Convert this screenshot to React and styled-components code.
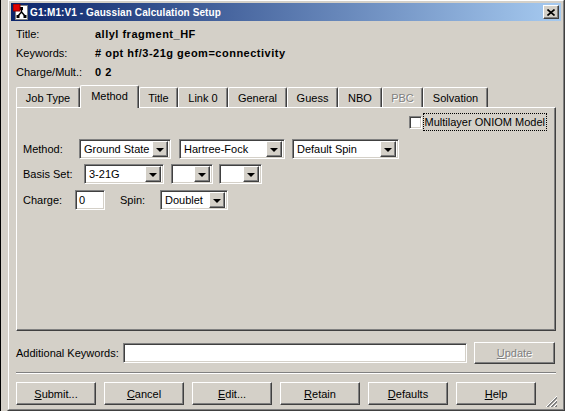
import styled, { createGlobalStyle } from "styled-components";

const GlobalStyle = createGlobalStyle`
  html, body {
    margin: 0;
    padding: 0;
  }
  body {
    width: 565px;
    height: 417px;
    overflow: hidden;
    background: #fff;
    font-family: "Liberation Sans", Arial, sans-serif;
    font-size: 11px;
    color: #000;
  }
`;

const face = "#d4d0c8";

const Desktop = styled.div`
  width: 565px;
  height: 417px;
  overflow: hidden;
  display: flex;
  flex-direction: column;
  background: #fff;
`;

const Upper = styled.div`
  display: flex;
  height: 411px;
  flex: none;
`;

const BackStrip = styled.div`
  width: 6px;
  flex: none;
  background: ${face};
  border-left: 1px solid #000;
`;

const Window = styled.div`
  flex: none;
  width: 558px;
  height: 412px;
  margin-top: -1px;
  box-sizing: border-box;
  border: 1px solid;
  border-color: ${face} #404040 #404040 ${face};
  background: ${face};
  display: flex;
`;

const WindowInner = styled.div`
  flex: 1;
  position: relative;
  border: 1px solid;
  border-color: #fff #808080 #808080 #fff;
  padding: 2px;
  display: flex;
  flex-direction: column;
`;

const TitleBar = styled.div`
  height: 18px;
  flex: none;
  display: flex;
  align-items: center;
  padding: 0 2px;
  background: linear-gradient(to right, #0a246a, #a6caf0);
`;

const TitleText = styled.span`
  margin-left: 1px;
  color: #fff;
  font-weight: bold;
  font-size: 10px;
  letter-spacing: 0.1px;
  white-space: nowrap;
`;

const raised = `
  border: 1px solid;
  border-color: #fff #404040 #404040 #fff;
  box-shadow: inset -1px -1px #808080;
  background: ${face};
`;

const CloseButton = styled.div`
  ${raised}
  box-sizing: border-box;
  margin-left: auto;
  width: 16px;
  height: 14px;
  display: flex;
  align-items: center;
  justify-content: center;
`;

const Content = styled.div`
  flex: 1;
  padding: 0 5px;
  display: flex;
  flex-direction: column;
`;

const Header = styled.div`
  margin-top: 3px;
  display: flex;
  flex-direction: column;
`;

const HeaderRow = styled.div`
  height: 19px;
  display: flex;
  align-items: center;
`;

const HeaderLabel = styled.span`
  width: 79px;
  flex: none;
`;

const HeaderValue = styled.span`
  font-weight: bold;
  letter-spacing: 0.5px;
  white-space: nowrap;
`;

const TabStrip = styled.div`
  margin-top: 4px;
  height: 22px;
  display: flex;
  align-items: flex-end;
  position: relative;
  z-index: 1;
`;

const Tab = styled.div`
  box-sizing: border-box;
  width: ${(p) => p.$w}px;
  height: ${(p) => (p.$active ? 23 : 20)}px;
  margin-bottom: ${(p) => (p.$active ? -1 : 0)}px;
  padding-bottom: ${(p) => (p.$active ? 3 : 0)}px;
  border-top: 1px solid #fff;
  border-left: 1px solid #fff;
  border-right: 1px solid #404040;
  border-radius: 2px 2px 0 0;
  box-shadow: inset -1px 0 #808080;
  background: ${face};
  display: flex;
  align-items: center;
  justify-content: center;
  white-space: nowrap;
  color: ${(p) => (p.$disabled ? "#808080" : "#000")};
  text-shadow: ${(p) => (p.$disabled ? "1px 1px #fff" : "none")};
`;

const Pane = styled.div`
  height: 224px;
  box-sizing: border-box;
  border: 1px solid;
  border-color: #fff #404040 #404040 #fff;
  box-shadow: inset -1px -1px #808080;
  padding: 5px 8px 0 6px;
  display: flex;
  flex-direction: column;
`;

const CheckRow = styled.div`
  height: 18px;
  display: flex;
  align-items: center;
  justify-content: flex-end;
`;

const sunken = `
  border: 1px solid;
  border-color: #808080 #fff #fff #808080;
  box-shadow: inset 1px 1px #404040, inset -1px -1px ${face};
`;

const CheckBox = styled.div`
  ${sunken}
  box-sizing: border-box;
  width: 13px;
  height: 13px;
  background: #fff;
`;

const FocusLabel = styled.span`
  margin-left: 1px;
  padding: 2px 1px;
  border: 1px dotted #000;
  white-space: nowrap;
`;

const FormRow = styled.div`
  margin-top: ${(p) => p.$top}px;
  display: flex;
  align-items: center;
`;

const FieldLabel = styled.span`
  width: ${(p) => p.$w}px;
  flex: none;
  white-space: nowrap;
`;

const Combo = styled.div`
  ${sunken}
  box-sizing: border-box;
  width: ${(p) => p.$w}px;
  height: 20px;
  margin-right: ${(p) => p.$mr || 0}px;
  flex: none;
  background: #fff;
  display: flex;
  align-items: center;
  padding: 2px;
`;

const ComboText = styled.span`
  flex: 1;
  padding-left: 2px;
  white-space: nowrap;
  overflow: hidden;
`;

const DropButton = styled.div`
  ${raised}
  box-sizing: border-box;
  width: 16px;
  height: 16px;
  flex: none;
  display: flex;
  align-items: center;
  justify-content: center;
  box-shadow: inset -1px -1px #808080, inset 1px 1px ${face};
  &::after {
    content: "";
    width: 0;
    height: 0;
    border-left: 4px solid transparent;
    border-right: 4px solid transparent;
    border-top: 4px solid #000;
    margin-top: 1px;
  }
`;

const TextField = styled.div`
  ${sunken}
  box-sizing: border-box;
  width: ${(p) => p.$w}px;
  height: 20px;
  flex: none;
  background: #fff;
  display: flex;
  align-items: center;
  padding: 0 3px;
  margin-right: ${(p) => p.$mr || 0}px;
`;

const KeywordRow = styled.div`
  margin-top: 11px;
  height: 22px;
  display: flex;
  align-items: center;
`;

const Button = styled.div`
  box-sizing: border-box;
  width: ${(p) => p.$w || 80}px;
  height: ${(p) => p.$h || 23}px;
  flex: none;
  border: 1px solid;
  border-color: #fff #404040 #404040 #fff;
  box-shadow: inset -1px -1px #808080;
  background: ${face};
  display: flex;
  align-items: center;
  justify-content: center;
  color: ${(p) => (p.$disabled ? "#808080" : "#000")};
  text-shadow: ${(p) => (p.$disabled ? "1px 1px #fff" : "none")};
  u {
    text-underline-offset: 1px;
  }
`;

const Separator = styled.div`
  margin-top: 8px;
  border-top: 1px solid #808080;
  border-bottom: 1px solid #fff;
`;

const ButtonRow = styled.div`
  margin-top: 8px;
  display: flex;
  gap: 8px;
`;

const Grip = styled.div`
  position: absolute;
  right: 6px;
  bottom: 2px;
  width: 13px;
  height: 13px;
  display: flex;
`;

const BottomStrip = styled.div`
  flex: 1;
  background: #fff;
`;

const AppIcon = () => (
  <svg width="16" height="16" viewBox="0 0 16 16">
    <rect x="2.5" y="1.5" width="12" height="14" fill="#fff" stroke="#808080" />
    <path d="M8.5 4 L8.5 8 L5 12 M8.5 8 L12 12" stroke="#000" strokeWidth="1.4" fill="none" />
    <rect x="7" y="3" width="3" height="3" fill="#000" />
    <rect x="3.5" y="11" width="3" height="3" fill="#000" />
    <rect x="10.5" y="11" width="3" height="3" fill="#000" />
    <rect x="0" y="0" width="7" height="7" fill="#e00000" stroke="#800000" />
  </svg>
);

const CloseGlyph = () => (
  <svg width="8" height="7" viewBox="0 0 8 7">
    <path d="M0.5 0.5 L7.5 6.5 M7.5 0.5 L0.5 6.5" stroke="#000" strokeWidth="1.6" />
  </svg>
);

const GripGlyph = () => (
  <svg width="13" height="13" viewBox="0 0 13 13">
    {[0, 4, 8].map((o) => (
      <g key={o}>
        <line x1={o + 2} y1="13" x2="13" y2={o + 2} stroke="#fff" />
        <line x1={o + 3} y1="13" x2="13" y2={o + 3} stroke="#808080" />
        <line x1={o + 4} y1="13" x2="13" y2={o + 4} stroke="#808080" />
      </g>
    ))}
  </svg>
);

const tabs = [
  { label: "Job Type", w: 64 },
  { label: "Method", w: 59, active: true },
  { label: "Title", w: 39 },
  { label: "Link 0", w: 50 },
  { label: "General", w: 59 },
  { label: "Guess", w: 51 },
  { label: "NBO", w: 44 },
  { label: "PBC", w: 41, disabled: true },
  { label: "Solvation", w: 65 },
];

const buttons = [
  ["S", "ubmit..."],
  ["C", "ancel"],
  ["E", "dit..."],
  ["R", "etain"],
  ["D", "efaults"],
  ["H", "elp"],
];

const Select = ({ w, mr, children }) => (
  <Combo $w={w} $mr={mr}>
    <ComboText>{children}</ComboText>
    <DropButton />
  </Combo>
);

export default function App() {
  return (
    <>
      <GlobalStyle />
      <Desktop>
        <Upper>
          <BackStrip />
          <Window>
            <WindowInner>
              <TitleBar>
                <AppIcon />
                <TitleText>G1:M1:V1 - Gaussian Calculation Setup</TitleText>
                <CloseButton>
                  <CloseGlyph />
                </CloseButton>
              </TitleBar>
              <Content>
                <Header>
                  <HeaderRow>
                    <HeaderLabel>Title:</HeaderLabel>
                    <HeaderValue>allyl fragment_HF</HeaderValue>
                  </HeaderRow>
                  <HeaderRow>
                    <HeaderLabel>Keywords:</HeaderLabel>
                    <HeaderValue># opt hf/3-21g geom=connectivity</HeaderValue>
                  </HeaderRow>
                  <HeaderRow>
                    <HeaderLabel>Charge/Mult.:</HeaderLabel>
                    <HeaderValue>0 2</HeaderValue>
                  </HeaderRow>
                </Header>

                <TabStrip>
                  {tabs.map((t) => (
                    <Tab key={t.label} $w={t.w} $active={t.active} $disabled={t.disabled}>
                      {t.label}
                    </Tab>
                  ))}
                </TabStrip>

                <Pane>
                  <CheckRow>
                    <CheckBox />
                    <FocusLabel>Multilayer ONIOM Model</FocusLabel>
                  </CheckRow>
                  <FormRow $top={8}>
                    <FieldLabel $w={56}>Method:</FieldLabel>
                    <Select w={92} mr={8}>Ground State</Select>
                    <Select w={106} mr={7}>Hartree-Fock</Select>
                    <Select w={107}>Default Spin</Select>
                  </FormRow>
                  <FormRow $top={5}>
                    <FieldLabel $w={61}>Basis Set:</FieldLabel>
                    <Select w={80} mr={7}>3-21G</Select>
                    <Select w={42} mr={6} />
                    <Select w={43} />
                  </FormRow>
                  <FormRow $top={6}>
                    <FieldLabel $w={52}>Charge:</FieldLabel>
                    <TextField $w={30} $mr={15}>0</TextField>
                    <FieldLabel $w={40}>Spin:</FieldLabel>
                    <Select w={68}>Doublet</Select>
                  </FormRow>
                </Pane>

                <KeywordRow>
                  <FieldLabel $w={107}>Additional Keywords:</FieldLabel>
                  <TextField $w={344} $mr={7} />
                  <Button $w={81} $h={22} $disabled>
                    <span>
                      <u>U</u>pdate
                    </span>
                  </Button>
                </KeywordRow>

                <Separator />

                <ButtonRow>
                  {buttons.map(([k, rest]) => (
                    <Button key={k}>
                      <span>
                        <u>{k}</u>
                        {rest}
                      </span>
                    </Button>
                  ))}
                </ButtonRow>
              </Content>
              <Grip>
                <GripGlyph />
              </Grip>
            </WindowInner>
          </Window>
        </Upper>
        <BottomStrip />
      </Desktop>
    </>
  );
}
